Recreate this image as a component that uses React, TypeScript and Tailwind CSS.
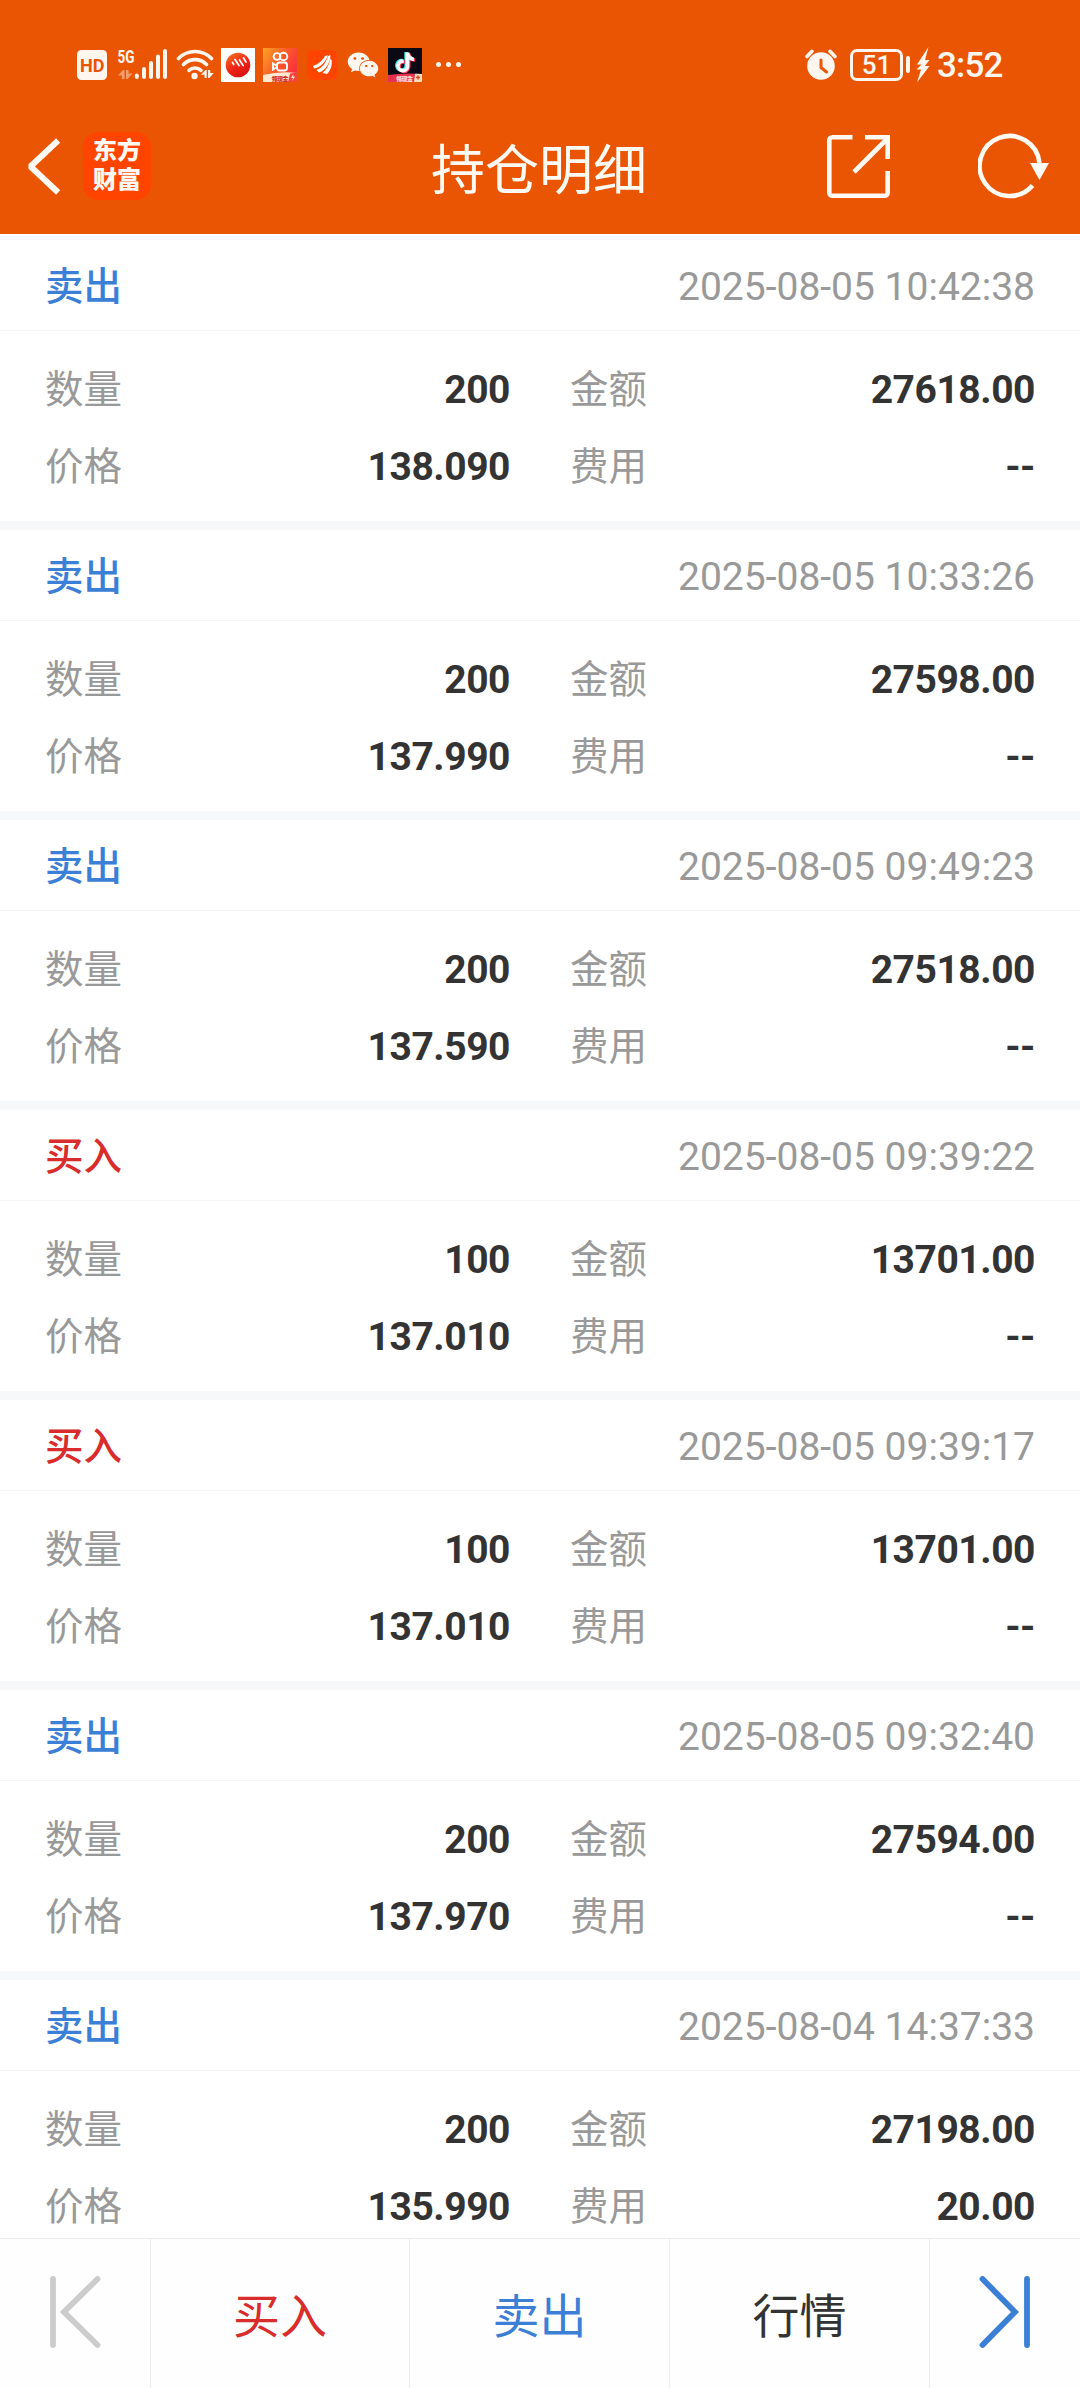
import React from "react";
import { FaWeixin } from "react-icons/fa";

type Trade = {
  side: "buy" | "sell";
  time: string;
  qty: string;
  price: string;
  amount: string;
  fee: string;
};

const trades: Trade[] = [
  { side: "sell", time: "2025-08-05 10:42:38", qty: "200", price: "138.090", amount: "27618.00", fee: "--" },
  { side: "sell", time: "2025-08-05 10:33:26", qty: "200", price: "137.990", amount: "27598.00", fee: "--" },
  { side: "sell", time: "2025-08-05 09:49:23", qty: "200", price: "137.590", amount: "27518.00", fee: "--" },
  { side: "buy", time: "2025-08-05 09:39:22", qty: "100", price: "137.010", amount: "13701.00", fee: "--" },
  { side: "buy", time: "2025-08-05 09:39:17", qty: "100", price: "137.010", amount: "13701.00", fee: "--" },
  { side: "sell", time: "2025-08-05 09:32:40", qty: "200", price: "137.970", amount: "27594.00", fee: "--" },
  { side: "sell", time: "2025-08-04 14:37:33", qty: "200", price: "135.990", amount: "27198.00", fee: "20.00" },
];

function DataArrows({ className }: { className: string }) {
  return (
    <g className={className} fill="currentColor">
      <path d="M0 5.5 L5 0 H6.5 V9 H4 V5.5 Z" />
      <path d="M14.5 3.5 L9.5 9 H8 V0 H10.5 V3.5 Z" />
    </g>
  );
}

function SignalIcon() {
  return (
    <svg width="50" height="34" viewBox="0 0 50 34" className="ml-[10px] overflow-visible">
      <text x="0.5" y="14.5" fontSize="18" fontWeight="700" textLength="17" lengthAdjust="spacingAndGlyphs" fill="currentColor">
        5G
      </text>
      <g transform="translate(1 22)">
        <DataArrows className="opacity-45" />
      </g>
      <path d="M19.8 27.5V29M27 21v8M34 15v14M41 8.500v20.500M48 3v26" stroke="currentColor" strokeWidth="4" strokeLinecap="round" />
    </svg>
  );
}

function WifiIcon() {
  return (
    <svg width="39" height="34" viewBox="0 0 39 34" className="ml-[9px]">
      <g fill="none" stroke="currentColor" strokeWidth="3.600" strokeLinecap="round">
        <path d="M2.500 10.500a23 23 0 0 1 33 0" />
        <path d="M7.500 16.500a16 16 0 0 1 23 0" />
        <path d="M13 22.300a9 9 0 0 1 12 0" />
      </g>
      <circle cx="18.500" cy="28" r="3.200" fill="currentColor" />
      <g transform="translate(25 22) scale(.88)">
        <DataArrows className="opacity-100" />
      </g>
    </svg>
  );
}

function SlashAppIcon() {
  return (
    <svg width="34" height="34" viewBox="0 0 34 34" className="ml-[6px]">
      <defs>
        <linearGradient id="ball" x1="0" y1="0" x2=".6" y2="1">
          <stop offset="0" stopColor="#f87a24" />
          <stop offset=".6" stopColor="#ee2416" />
          <stop offset="1" stopColor="#d91414" />
        </linearGradient>
      </defs>
      <rect width="34" height="34" fill="#fff" />
      <circle cx="17" cy="17" r="12.300" fill="url(#ball)" />
      <path d="M11.500 14.500l1.300 2M14 11.500l4 6M18.500 12l3.700 5.500M22.500 10l2.500 4" stroke="#fff" strokeWidth="1.700" strokeLinecap="round" />
    </svg>
  );
}

function KuaishouIcon() {
  return (
    <svg width="34" height="34" viewBox="0 0 34 34" className="ml-[8px]">
      <defs>
        <linearGradient id="ks" x1="0" y1="0" x2="1" y2=".6">
          <stop offset="0" stopColor="#fba422" />
          <stop offset=".55" stopColor="#fb5a2c" />
          <stop offset="1" stopColor="#f9303e" />
        </linearGradient>
      </defs>
      <rect width="34" height="34" fill="url(#ks)" />
      <g fill="none" stroke="#fff" strokeWidth="1.900">
        <circle cx="14" cy="8.500" r="3.400" />
        <circle cx="20.500" cy="8.500" r="3.800" />
        <rect x="14" y="14.500" width="10" height="8" rx="2.500" />
        <path d="M14 18l-4-2.500v6L14 19" />
      </g>
      <path d="M0 27Q17 23 34 25V34H0Z" fill="#ffe9d2" />
      <path d="M27 25.500l7-1V34h-9z" fill="#f4443c" />
      <text x="8.500" y="32.500" fontSize="6" fontWeight="900" textLength="17" fill="#d52a20">领现金</text>
      <path d="M30.500 26l-2.500 4h2l-1 3 3-4.500h-2z" fill="#ffe9d2" />
    </svg>
  );
}

function EastMoneyIcon() {
  return (
    <svg width="30" height="34" viewBox="0 0 30 34" className="ml-[10px]">
      <rect y="2" width="30" height="30" rx="6" fill="#ff4400" />
      <g fill="#fff">
        <path d="M6 18C11 16.500 15.500 12.500 18 8l3-.8C18.500 14 13.500 19.500 7 20.500Z" />
        <path d="M9.500 22C15 20 19 15 21 8l2.500-1C23 15.500 19 22 12 24.500Z" />
        <path d="M15.500 25C20 21 22.500 16.500 23 10.500l1.700 2c.5 5-1 9.500-4.500 13.500Z" />
      </g>
    </svg>
  );
}

function DouyinIcon() {
  const note = "M17.500 4.500h3.800c.3 3 2.200 4.700 4.700 5v3.600c-1.700 0-3.300-.5-4.600-1.500v6.300a6.600 6.600 0 1 1-5.700-6.500v3.800a2.900 2.900 0 1 0 1.900 2.700Z";
  return (
    <svg width="34" height="34" viewBox="0 0 34 34" className="ml-[9px]">
      <rect width="34" height="34" fill="#0b0a14" />
      <path d={note} fill="#35e5e5" transform="translate(-1.200 -.6)" />
      <path d={note} fill="#fa2f60" transform="translate(1.100 .7)" />
      <path d={note} fill="#fff" />
      <path d="M0 27Q17 24.500 34 26V34H0Z" fill="#e8304f" />
      <path d="M27 25.800l7 .2v8h-8z" fill="#ffdfb8" />
      <text x="8" y="32.500" fontSize="6" fontWeight="900" textLength="17" fill="#ffdcd6">领现金</text>
      <path d="M30 27.500v4M28 29.500h4" stroke="#d9482f" strokeWidth="1.500" />
    </svg>
  );
}

function StatusBar() {
  return (
    <div className="flex h-[130px] items-start pt-[48px] pl-[77px] pr-[79px] text-[#fff6f0]">
      <svg width="30" height="34" viewBox="0 0 30 34">
        <rect y="2" width="30" height="30" rx="4.500" fill="currentColor" />
        <text x="3" y="24" fontSize="19" fontWeight="700" textLength="24.500" lengthAdjust="spacingAndGlyphs" fill="#ea5504">
          HD
        </text>
      </svg>
      <SignalIcon />
      <WifiIcon />
      <SlashAppIcon />
      <KuaishouIcon />
      <EastMoneyIcon />
      <FaWeixin className="mt-px ml-[10px] h-[32px] w-[32px]" />
      <DouyinIcon />
      <div className="mt-[14px] ml-[14px] flex gap-[5px]">
        <i className="size-[5px] rounded-full bg-current" />
        <i className="size-[5px] rounded-full bg-current" />
        <i className="size-[5px] rounded-full bg-current" />
      </div>
      <svg width="34" height="34" viewBox="0 0 34 34" className="ml-auto">
        <circle cx="17" cy="18" r="13.800" fill="currentColor" />
        <path d="M3 8.500l5-5.200M31 8.500l-5-5.200" stroke="currentColor" strokeWidth="3.600" strokeLinecap="round" />
        <path d="M17 12v7.500l5.500 4.500" fill="none" stroke="#ea5504" strokeWidth="3" strokeLinecap="round" strokeLinejoin="round" />
      </svg>
      <div className="mt-[1px] ml-[12px] flex h-[32px] w-[53px] items-center justify-center rounded-[7px] border-[3px] border-current text-[26px] leading-none font-medium">
        51
      </div>
      <i className="mt-[8px] ml-[3px] h-[17px] w-[4px] rounded-full bg-current" />
      <svg width="14" height="36" viewBox="0 0 14 36" className="-mt-px ml-[6px]">
        <path d="M12.500 0L1 17.500H5.500L.5 22.500H5L1 35.500 13.500 19H8.800L13.500 13H9Z" fill="currentColor" />
      </svg>
      <span className="ml-[7px] w-[64px] text-[35px] leading-[35px] font-medium tracking-[-0.8px]">3:52</span>
    </div>
  );
}

function NavBar() {
  return (
    <div className="flex h-[104px] items-start text-[#fffaf4]">
      <svg width="36" height="60" viewBox="0 0 36 60" className="mt-[7px] ml-[25px]">
        <path d="M31 5.500L5.500 29.500L31 53.500" fill="none" stroke="currentColor" strokeWidth="6" strokeLinecap="square" strokeLinejoin="bevel" />
      </svg>
      <div className="mt-[2px] ml-[22px] flex size-[68px] flex-col items-center justify-center rounded-[15px] bg-[#ff4400] text-[24px] leading-[29px] font-black">
        <span>东方</span>
        <span>财富</span>
      </div>
      <h1 className="mt-[12px] ml-[280px] w-[216px] text-[54px] leading-[60px] font-normal">持仓明细</h1>
      <svg width="64" height="64" viewBox="0 0 64 64" className="mt-[5px] ml-[180px]">
        <g fill="none" stroke="currentColor" strokeWidth="4.600">
          <path d="M25.500 2.300H5.300a3 3 0 0 0-3 3V57.700a3 3 0 0 0 3 3H57.700a3 3 0 0 0 3-3V36" />
          <path d="M38 2.300H60.700V24" />
          <path d="M27 37L60 4" />
        </g>
      </svg>
      <svg width="72" height="66" viewBox="0 0 72 66" className="mt-[3px] ml-[87px]">
        <path d="M54.500 52.500A30 30 0 1 1 61.500 30" fill="none" stroke="currentColor" strokeWidth="4.600" />
        <path d="M52 30H71L61.500 47Z" fill="currentColor" />
      </svg>
    </div>
  );
}

function Cell({ label, value }: { label: string; value: string }) {
  return (
    <div className="flex items-center justify-between">
      <span className="text-[38.500px] text-[#999]">{label}</span>
      <span className="font-bold tracking-[-0.45px] text-[#333]">{value}</span>
    </div>
  );
}

function TradeCard({ trade }: { trade: Trade }) {
  const sell = trade.side === "sell";
  return (
    <section className="mb-[9px] h-[281px] shrink-0 bg-white text-[39px] leading-[56px]">
      <div className="flex h-[91px] items-center justify-between border-b border-[#f5f5f5] px-[45px] pt-[4px]">
        <span className={sell ? "text-[38.500px] font-medium text-[#3b7fd6]" : "text-[38.500px] font-medium text-[#d92c2c]"}>
          {sell ? "卖出" : "买入"}
        </span>
        <span className="text-[#999]">{trade.time}</span>
      </div>
      <div className="grid grid-cols-[465px_465px] gap-x-[60px] gap-y-[21px] px-[45px] pt-[31px]">
        <Cell label="数量" value={trade.qty} />
        <Cell label="金额" value={trade.amount} />
        <Cell label="价格" value={trade.price} />
        <Cell label="费用" value={trade.fee} />
      </div>
    </section>
  );
}

function BottomBar() {
  return (
    <footer className="grid h-[150px] shrink-0 grid-cols-[151px_259px_260px_260px_150px] border-t border-[#ebebeb] bg-[#fefefe] text-[47px] leading-[60px]">
      <div className="border-r border-[#ebebeb] pt-[37px] pl-[49px]">
        <svg width="52" height="75" viewBox="0 0 52 75" fill="none" stroke="#ccc" strokeWidth="5.800" strokeLinecap="round">
          <path d="M4 3V69" />
          <path d="M48.500 3L15 36L48.500 69" />
        </svg>
      </div>
      <div className="border-r border-[#ebebeb] pt-[48px] text-center text-[#d92c2c]">买入</div>
      <div className="border-r border-[#ebebeb] pt-[48px] text-center text-[#3b7fd6]">卖出</div>
      <div className="border-r border-[#ebebeb] pt-[48px] text-center text-[#333]">行情</div>
      <div className="pt-[37px] pl-[49px]">
        <svg width="52" height="75" viewBox="0 0 52 75" fill="none" stroke="#3b7fd6" strokeWidth="5.800" strokeLinecap="round">
          <path d="M48 3V69" />
          <path d="M3.500 3L36 36L3.500 69" />
        </svg>
      </div>
    </footer>
  );
}

export default function App() {
  return (
    <div className="flex h-[2388px] w-[1080px] flex-col overflow-hidden bg-[#f7f8fa] font-[Roboto,'Noto_Sans_CJK_SC',sans-serif]">
      <header className="h-[236px] shrink-0 border-b-2 border-white bg-[#ea5504]">
        <StatusBar />
        <NavBar />
      </header>
      <main className="flex min-h-0 flex-1 flex-col overflow-hidden pt-[4px]">
        {trades.map((t) => (
          <TradeCard key={t.time} trade={t} />
        ))}
      </main>
      <BottomBar />
    </div>
  );
}
